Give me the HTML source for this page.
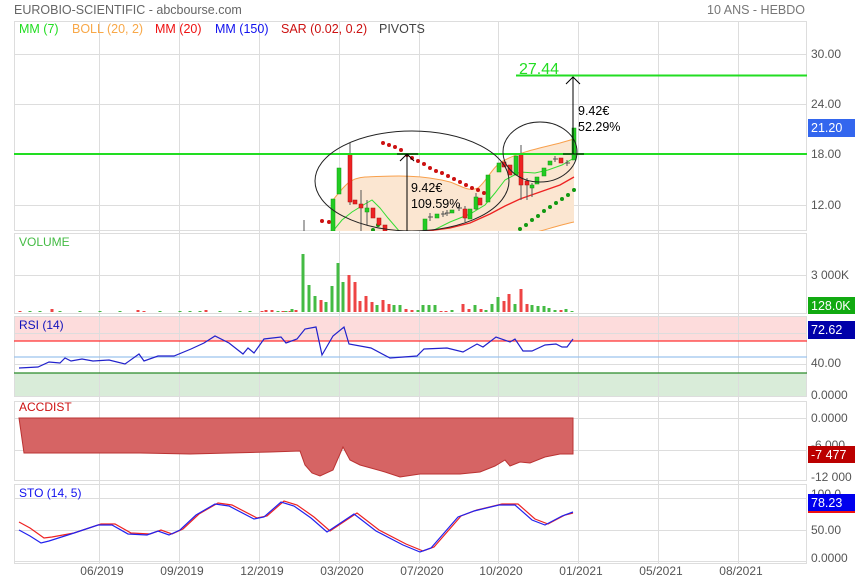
<!DOCTYPE html>
<html><head><meta charset="utf-8"><style>
html,body{margin:0;padding:0;background:#fff;width:855px;height:580px;overflow:hidden}
svg{display:block;font-family:"Liberation Sans",sans-serif}
</style></head><body>
<svg width="855" height="580" viewBox="0 0 855 580" xmlns="http://www.w3.org/2000/svg">
<rect width="855" height="580" fill="#fff"/>
<text x="14" y="14" font-size="12.5" fill="#666">EUROBIO-SCIENTIFIC - abcbourse.com</text>
<text x="805" y="14" font-size="12.5" fill="#777" text-anchor="end">10 ANS - HEBDO</text>

<g stroke="#ddd" stroke-width="1" fill="none">
<rect x="14.5" y="21.5" width="792" height="209"/>
<rect x="14.5" y="233.5" width="792" height="80"/>
<rect x="14.5" y="401.5" width="792" height="79"/>
<rect x="14.5" y="484.5" width="792" height="79"/>
</g>
<rect x="15" y="316" width="792" height="25" fill="#fddcdc"/>
<rect x="15" y="373" width="792" height="24" fill="#d9ecd9"/>
<rect x="14.5" y="316.5" width="792" height="80" fill="none" stroke="#ddd"/>
<g stroke="#ddd" stroke-width="1">
<line x1="99.5" y1="21" x2="99.5" y2="564"/><line x1="179.5" y1="21" x2="179.5" y2="564"/>
<line x1="259.5" y1="21" x2="259.5" y2="564"/><line x1="339.5" y1="21" x2="339.5" y2="564"/>
<line x1="419.5" y1="21" x2="419.5" y2="564"/><line x1="498.5" y1="21" x2="498.5" y2="564"/>
<line x1="578.5" y1="21" x2="578.5" y2="564"/><line x1="658.5" y1="21" x2="658.5" y2="564"/>
<line x1="738.5" y1="21" x2="738.5" y2="564"/>
<line x1="14" y1="54.5" x2="807" y2="54.5"/><line x1="14" y1="104.5" x2="807" y2="104.5"/>
<line x1="14" y1="205.5" x2="807" y2="205.5"/>
<line x1="14" y1="275.5" x2="807" y2="275.5"/>
<line x1="14" y1="333.5" x2="807" y2="333.5"/><line x1="14" y1="364.5" x2="807" y2="364.5"/>
<line x1="14" y1="418.5" x2="807" y2="418.5"/><line x1="14" y1="450.5" x2="807" y2="450.5"/>
<line x1="14" y1="498.5" x2="807" y2="498.5"/><line x1="14" y1="530.5" x2="807" y2="530.5"/><line x1="14" y1="561.5" x2="807" y2="561.5"/>
</g>
<line x1="14" y1="341" x2="807" y2="341" stroke="#f33" stroke-width="1.2"/>
<line x1="14" y1="357" x2="807" y2="357" stroke="#9cc4ee" stroke-width="1.2"/>
<line x1="14" y1="373" x2="807" y2="373" stroke="#2a8a2a" stroke-width="1.2"/>

<g font-size="12.5">
<text x="19" y="33" fill="#22dd22">MM (7)</text>
<text x="72" y="33" fill="#f8a848">BOLL (20, 2)</text>
<text x="155" y="33" fill="#ee1111">MM (20)</text>
<text x="215" y="33" fill="#1111ee">MM (150)</text>
<text x="281" y="33" fill="#cc1111">SAR (0.02, 0.2)</text>
<text x="379" y="33" fill="#444">PIVOTS</text>
</g>

<svg x="14" y="21" width="793" height="210" viewBox="14 21 793 210" overflow="hidden">
<path d="M333,200 C345,185 350,178 365,177 C390,176 420,174 450,182 C462,186 468,192 478,188 C488,180 492,166 505,160 C520,152 540,148 560,143 L574,139 L574,222 C560,226 545,230 525,236 L333,240 Z" fill="#fbe6d1" stroke="none"/>
<path d="M333,200 C345,185 350,178 365,177 C390,176 420,174 450,182 C462,186 468,192 478,188 C488,180 492,166 505,160 C520,152 540,148 560,143 L574,139" fill="none" stroke="#f8a04c" stroke-width="1"/>
<path d="M520,236 C540,232 555,226 574,222" fill="none" stroke="#f8a04c" stroke-width="1"/>
<polyline points="333,231 342,220 352,212 365,204 372,200 380,208 388,218 400,232 430,232 450,222 470,214 485,205 495,193 505,180 520,172 535,173 548,170 562,165 574,158" fill="none" stroke="#33dd33" stroke-width="1"/>
<polyline points="420,232 450,228 470,223 490,214 505,206 520,199 540,192 560,185 574,177" fill="none" stroke="#ee2222" stroke-width="1.3"/>
<g fill="#cc1111">
<circle cx="322" cy="221" r="2"/><circle cx="329" cy="222" r="2"/>
<circle cx="383" cy="143" r="2"/><circle cx="389" cy="145" r="2"/><circle cx="395" cy="147" r="2"/><circle cx="401" cy="150" r="2"/>
<circle cx="407" cy="155" r="2"/><circle cx="412" cy="158" r="2"/><circle cx="418" cy="161" r="2"/><circle cx="424" cy="164" r="2"/>
<circle cx="430" cy="168" r="2"/><circle cx="436" cy="171" r="2"/><circle cx="442" cy="173" r="2"/><circle cx="448" cy="176" r="2"/>
<circle cx="454" cy="179" r="2"/><circle cx="460" cy="182" r="2"/><circle cx="466" cy="185" r="2"/><circle cx="472" cy="188" r="2"/>
<circle cx="478" cy="190" r="2"/><circle cx="484" cy="193" r="2"/>
</g>
<g fill="#119911">
<circle cx="373" cy="230" r="2"/><circle cx="378" cy="225" r="2"/>
<circle cx="520" cy="229" r="2"/><circle cx="526" cy="225" r="2"/><circle cx="532" cy="220" r="2"/><circle cx="538" cy="216" r="2"/>
<circle cx="544" cy="211" r="2"/><circle cx="550" cy="207" r="2"/><circle cx="556" cy="203" r="2"/><circle cx="562" cy="199" r="2"/>
<circle cx="568" cy="195" r="2"/><circle cx="574" cy="190" r="2"/>
</g>
<g stroke="#555" stroke-width="1">
<line x1="304" y1="220" x2="304" y2="231"/>
<line x1="350" y1="143" x2="350" y2="205"/><line x1="361" y1="190" x2="361" y2="231"/><line x1="367" y1="200" x2="367" y2="225"/>
<line x1="521" y1="145" x2="521" y2="200"/><line x1="527" y1="178" x2="527" y2="200"/><line x1="532" y1="183" x2="532" y2="197"/>
<line x1="430" y1="213" x2="430" y2="221"/><line x1="443" y1="211" x2="443" y2="217"/><line x1="447" y1="210" x2="447" y2="216"/><line x1="459" y1="205" x2="459" y2="211"/>
<line x1="555" y1="156" x2="555" y2="162"/><line x1="567" y1="160" x2="567" y2="166"/><line x1="465" y1="206" x2="465" y2="222"/><line x1="476" y1="193" x2="476" y2="210"/>
</g>
<g fill="#22cc22" stroke="#119911" stroke-width="0.5">
<rect x="331" y="199" width="4" height="32"/><rect x="337" y="168" width="4" height="26"/>
<rect x="365" y="208" width="4" height="4"/><rect x="423" y="219" width="4" height="12"/>
<rect x="435" y="214" width="4" height="4"/><rect x="450" y="210" width="4" height="3"/>
<rect x="468" y="209" width="4" height="10"/><rect x="474" y="197" width="4" height="12"/>
<rect x="486" y="175" width="4" height="27"/><rect x="497" y="163" width="4" height="9"/>
<rect x="514" y="156" width="4" height="19"/><rect x="530" y="185" width="4" height="3"/>
<rect x="535" y="177" width="4" height="7"/><rect x="542" y="168" width="4" height="8"/>
<rect x="548" y="161" width="4" height="4"/><rect x="572" y="128" width="4" height="32"/>
</g>
<g fill="#ee2222" stroke="#aa1111" stroke-width="0.5">
<rect x="348" y="154" width="4" height="48"/><rect x="353" y="200" width="4" height="4"/>
<rect x="359" y="204" width="4" height="4"/><rect x="371" y="208" width="4" height="10"/>
<rect x="377" y="218" width="4" height="7"/><rect x="383" y="225" width="4" height="6"/>
<rect x="463" y="209" width="4" height="9"/><rect x="478" y="198" width="4" height="7"/>
<rect x="502" y="162" width="4" height="5"/><rect x="508" y="165" width="4" height="10"/>
<rect x="519" y="154" width="4" height="31"/><rect x="525" y="181" width="4" height="4"/>
<rect x="559" y="158" width="4" height="5"/>
</g>
<g stroke="#555" stroke-width="1"><line x1="428" y1="217" x2="433" y2="217"/><line x1="441" y1="214" x2="446" y2="214"/><line x1="445" y1="213" x2="450" y2="213"/><line x1="457" y1="208" x2="462" y2="208"/><line x1="553" y1="159" x2="558" y2="159"/><line x1="565" y1="163" x2="570" y2="163"/></g>
<line x1="14" y1="154" x2="807" y2="154" stroke="#22dd22" stroke-width="2"/>
<line x1="516" y1="75.5" x2="807" y2="75.5" stroke="#22dd22" stroke-width="2"/>
<ellipse cx="412" cy="181" rx="97" ry="50" fill="none" stroke="#222" stroke-width="1"/>
<ellipse cx="540" cy="152" rx="37" ry="30" fill="none" stroke="#222" stroke-width="1"/>
<g stroke="#000" stroke-width="1" fill="none">
<line x1="407" y1="154" x2="407" y2="232"/><polyline points="400,161 407,154 414,161"/><line x1="397" y1="154" x2="418" y2="154"/>
<line x1="573" y1="77" x2="573" y2="154"/><polyline points="566,84 573,77 580,84"/><line x1="563" y1="154" x2="584" y2="154"/>
</g>
</svg>
<text x="411" y="192" font-size="12.5" fill="#000">9.42€</text>
<text x="411" y="208" font-size="12.5" fill="#000">109.59%</text>
<text x="578" y="115" font-size="12.5" fill="#000">9.42€</text>
<text x="578" y="131" font-size="12.5" fill="#000">52.29%</text>
<text x="519" y="74" font-size="16" fill="#22dd22">27.44</text>

<text x="19" y="246" font-size="12" fill="#44bb44">VOLUME</text>
<g stroke-width="3">
<path d="M20,312V311M52,312V309M138,312V310M144,312V311M206,312V310M262,312V311M266,312V310M272,312V310M283,312V311M290,312V311M296,312V310" stroke="#ee4444"/>
<path d="M30,312V311M40,312V311M60,312V311M80,312V311M100,312V311M120,312V311M160,312V311M180,312V311M190,312V311M200,312V311M220,312V311M240,312V311M250,312V311M278,312V311M286,312V311M292,312V309" stroke="#44bb44"/>
<path d="M303,312V254M309,312V285M315,312V296M326,312V302M332,312V286M338,312V263M343,312V282M377,312V305M394,312V305M400,312V305M418,312V310M423,312V305M429,312V305M435,312V305M452,312V310M475,312V305M486,312V310M492,312V304M498,312V297M515,312V304M532,312V305M538,312V306M544,312V306M549,312V308M555,312V310M566,312V309M572,312V311" stroke="#44bb44"/>
<path d="M321,312V300M349,312V275M355,312V282M360,312V301M366,312V296M372,312V302M383,312V300M389,312V304M406,312V309M412,312V310M441,312V311M446,312V311M463,312V304M469,312V309M481,312V309M504,312V301M509,312V294M521,312V289M527,312V304M561,312V310" stroke="#ee4444"/>
</g>

<text x="19" y="329" font-size="12" fill="#1111bb">RSI (14)</text>
<polyline points="19,368 38,367 49,362 60,363 65,358 71,361 82,359 93,361 109,360 125,364 139,354 144,361 158,356 174,356 191,349 204,343 215,336 229,343 243,354 248,348 254,353 264,339 281,337 286,343 297,339 305,329 316,327 322,355 333,336 344,327 349,344 371,348 390,358 417,356 424,349 447,348 463,352 477,344 483,347 496,337 510,342 515,339 523,351 532,351 545,345 556,344 562,347 567,347 573,339" fill="none" stroke="#2222cc" stroke-width="1.2"/>

<text x="19" y="411" font-size="12" fill="#cc1111">ACCDIST</text>
<polygon points="19,418 24,453 140,453 190,454 270,452 300,451 305,465 312,473 320,476 333,470 343,447 350,460 360,465 385,472 400,477 420,474 460,474 480,472 495,466 505,460 510,466 520,462 530,463 545,457 560,454 573,454 573,418" fill="#d66464" stroke="#b33" stroke-width="1"/>

<text x="19" y="497" font-size="12" fill="#1111ee">STO (14, 5)</text>
<polyline points="19,522 30,528 44,538 52,537 74,533 101,524 115,524 131,533 150,534 161,530 172,534 183,529 199,514 218,503 232,505 257,518 267,516 284,501 297,505 314,517 330,531 357,513 379,530 406,544 423,551 434,547 461,516 477,510 502,504 518,504 535,519 548,524 565,515 573,513" fill="none" stroke="#ee2222" stroke-width="1.2"/>
<polyline points="19,530 30,536 41,543 49,541 71,534 98,525 112,525 128,534 147,535 158,531 169,535 180,530 196,515 215,504 229,506 254,519 264,517 281,502 294,506 311,518 327,532 354,514 376,531 403,545 420,552 431,548 458,517 474,511 499,505 515,505 532,520 545,525 562,516 573,512" fill="none" stroke="#2222ee" stroke-width="1.2"/>

<g font-size="12" fill="#555">
<text x="811" y="58">30.00</text><text x="811" y="108">24.00</text><text x="811" y="158">18.00</text><text x="811" y="209">12.00</text>
<text x="811" y="279">3 000K</text><text x="811" y="367">40.00</text><text x="811" y="399">0.0000</text>
<text x="811" y="422">0.0000</text><text x="811" y="449">-6 000</text><text x="811" y="481">-12 000</text>
<text x="811" y="498">100.0</text><text x="811" y="534">50.00</text><text x="811" y="562">0.0000</text>
</g>
<rect x="808" y="119" width="47" height="18" fill="#3366ee"/><text x="811" y="132" font-size="12.5" fill="#fff">21.20</text>
<rect x="808" y="297" width="47" height="17" fill="#11aa11"/><text x="811" y="310" font-size="12.5" fill="#fff">128.0K</text>
<rect x="808" y="321" width="47" height="18" fill="#0000aa"/><text x="811" y="334" font-size="12.5" fill="#fff">72.62</text>
<rect x="808" y="446" width="47" height="17" fill="#bb0000"/><text x="811" y="459" font-size="12.5" fill="#fff">-7 477</text>
<rect x="808" y="494" width="47" height="17" fill="#0000ee"/>
<rect x="808" y="511" width="47" height="2" fill="#ee1111"/>
<text x="811" y="507" font-size="12.5" fill="#fff">78.23</text>

<g font-size="12" fill="#555" text-anchor="middle">
<text x="102" y="575">06/2019</text><text x="182" y="575">09/2019</text><text x="262" y="575">12/2019</text>
<text x="342" y="575">03/2020</text><text x="422" y="575">07/2020</text><text x="501" y="575">10/2020</text>
<text x="581" y="575">01/2021</text><text x="661" y="575">05/2021</text><text x="741" y="575">08/2021</text>
</g>
</svg>
</body></html>
